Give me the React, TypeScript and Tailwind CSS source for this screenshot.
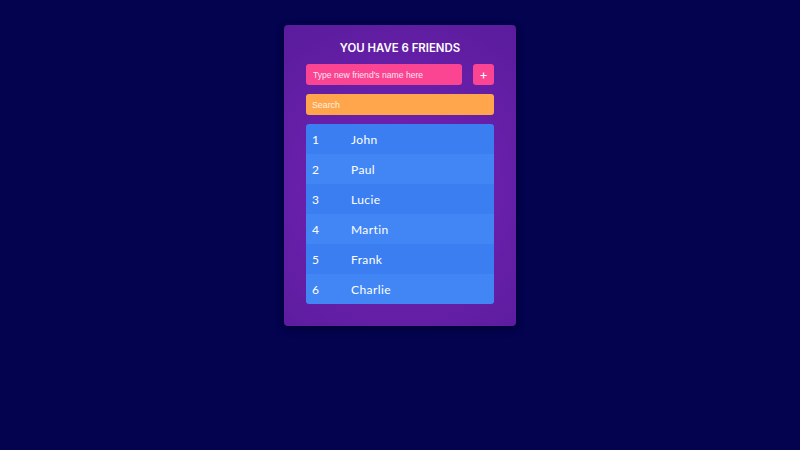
import React, { useState } from 'react';

const initialFriends = ['John', 'Paul', 'Lucie', 'Martin', 'Frank', 'Charlie'];

export default function App() {
  const [friends] = useState(initialFriends);
  const [name, setName] = useState('');
  const [search, setSearch] = useState('');

  return (
    <div className="min-h-[450px] w-full bg-[#03034f] flex justify-center pt-[25px]" style={{ fontFamily: 'Inter, sans-serif' }}>
      <div className="w-[232px] h-[301px] rounded-[4px] bg-[radial-gradient(circle_at_50%_55%,#7a1eaf_0%,#661fa8_55%,#5a1c9c_100%)] px-[22px] pt-[15px] shadow-[0_2px_8px_rgba(0,0,0,0.4)]">
        <h1 className="text-center text-white font-semibold text-[11.4px] leading-[16px]">
          YOU HAVE {friends.length} FRIENDS
        </h1>

        {/* Add friend */}
        <div className="mt-[8px] flex gap-[11px]">
          <input
            value={name}
            onChange={(e) => setName(e.target.value)}
            placeholder="Type new friend's name here"
            className="w-[156px] h-[21px] rounded-[3px] bg-[#fb4592] px-[7px] text-[8.6px] text-white placeholder:text-[#ffe3ef] outline-none"
            style={{ fontFamily: '"Liberation Sans", Arial, sans-serif' }}
          />
          <button className="w-[21px] h-[21px] rounded-[3px] bg-[#fb4592] text-white text-[13px] leading-none flex items-center justify-center">
            +
          </button>
        </div>

        {/* Search */}
        <input
          value={search}
          onChange={(e) => setSearch(e.target.value)}
          placeholder="Search"
          className="mt-[9px] block w-[188px] h-[21px] rounded-[3px] bg-[#ffa64c] px-[6px] text-[8.8px] text-white placeholder:text-[#fff1e0] outline-none"
          style={{ fontFamily: '"Liberation Sans", Arial, sans-serif' }}
        />

        {/* List */}
        <div className="mt-[9px] rounded-[3px] overflow-hidden" style={{ fontFamily: 'Lato, "Open Sans", sans-serif' }}>
          {friends
            .filter((f) => f.toLowerCase().includes(search.toLowerCase()))
            .map((f, i) => (
              <div
                key={f}
                className={`h-[30px] flex items-center pt-[2px] text-white text-[12px] tracking-[0.4px] ${i % 2 === 0 ? 'bg-[#3b7ef2]' : 'bg-[#4286f5]'}`}
              >
                <span className="w-[45px] pl-[6px]">{i + 1}</span>
                <span>{f}</span>
              </div>
            ))}
        </div>
      </div>
    </div>
  );
}
